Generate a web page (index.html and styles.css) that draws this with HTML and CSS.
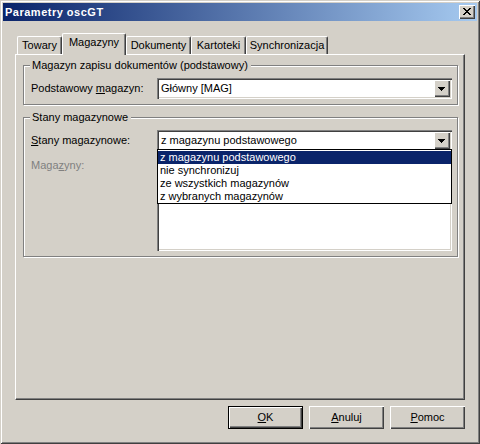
FILE: index.html
```html
<!DOCTYPE html>
<html lang="pl">
<head>
<meta charset="utf-8">
<title>Parametry oscGT</title>
<link rel="stylesheet" href="styles.css">
</head>
<body>
<div class="window">
  <div class="titlebar">
    <span class="title">Parametry oscGT</span>
    <span class="close"><svg width="8" height="7" viewBox="0 0 8 7" shape-rendering="crispEdges"><path d="M0 0h2v1H0z M6 0h2v1H6z M1 1h2v1H1z M5 1h2v1H5z M2 2h4v1H2z M3 3h2v1H3z M2 4h4v1H2z M1 5h2v1H1z M5 5h2v1H5z M0 6h2v1H0z M6 6h2v1H6z" fill="#000"/></svg></span>
  </div>
  <div class="tabstrip">
    <div class="tab t-towary">Towary</div>
    <div class="tab sel t-magazyny">Magazyny</div>
    <div class="tab t-dokumenty">Dokumenty</div>
    <div class="tab t-kartoteki">Kartoteki</div>
    <div class="tab t-synchro">Synchronizacja</div>
  </div>
  <div class="panel">
    <div class="group g1">
      <div class="legend">Magazyn zapisu dokumentów (podstawowy)</div>
      <div class="row">
        <label class="lbl">Podstawowy <u>m</u>agazyn:</label>
        <div class="combo">
          <span class="val">Główny [MAG]</span>
          <span class="ddbtn"><svg width="7" height="4" viewBox="0 0 7 4" shape-rendering="crispEdges"><path d="M0 0h7v1H0z M1 1h5v1H1z M2 2h3v1H2z M3 3h1v1H3z" fill="#000"/></svg></span>
        </div>
      </div>
    </div>
    <div class="group g2">
      <div class="legend">Stany magazynowe</div>
      <div class="row">
        <label class="lbl"><u>S</u>tany magazynowe:</label>
        <div class="combo open">
          <span class="val">z magazynu podstawowego</span>
          <span class="ddbtn"><svg width="7" height="4" viewBox="0 0 7 4" shape-rendering="crispEdges"><path d="M0 0h7v1H0z M1 1h5v1H1z M2 2h3v1H2z M3 3h1v1H3z" fill="#000"/></svg></span>
          <ul class="dropdown">
            <li class="hl">z magazynu podstawowego</li>
            <li>nie synchronizuj</li>
            <li>ze wszystkich magazynów</li>
            <li>z wybranych magazynów</li>
          </ul>
        </div>
      </div>
      <div class="row row-top">
        <label class="lbl disabled">Maga<u>z</u>yny:</label>
        <div class="listbox"></div>
      </div>
    </div>
  </div>
  <div class="buttons">
    <button class="btn default"><u>O</u>K</button>
    <button class="btn"><u>A</u>nuluj</button>
    <button class="btn"><u>P</u>omoc</button>
  </div>
</div>
</body>
</html>
```

FILE: styles.css
```css
html, body {
  margin: 0;
  padding: 0;
  background: #D4D0C8;
}
body {
  font-family: "Liberation Sans", Arial, sans-serif;
  font-size: 11px;
  line-height: 13px;
  color: #000;
}
.window {
  width: 480px;
  height: 444px;
  box-sizing: border-box;
  padding: 3px;
  background: #D4D0C8;
  box-shadow: inset 1px 1px 0 #D4D0C8, inset -1px -1px 0 #404040, inset 2px 2px 0 #FFFFFF, inset -2px -2px 0 #808080;
}
.titlebar {
  height: 18px;
  display: flex;
  align-items: center;
  justify-content: space-between;
  background: linear-gradient(to right, #0A246A, #A6CAF0);
  padding: 0 2px;
}
.title {
  color: #fff;
  font-weight: bold;
  letter-spacing: 0.5px;
}
.close {
  width: 16px;
  height: 14px;
  box-sizing: border-box;
  padding: 3px 0 0 4px;
  background: #D4D0C8;
  box-shadow: inset 1px 1px 0 #FFFFFF, inset -1px -1px 0 #404040, inset -2px -2px 0 #808080;
}
.close svg, .ddbtn svg { display: block; }

.tabstrip {
  display: flex;
  align-items: flex-end;
  height: 21px;
  margin: 12px 12px 0;
  padding-left: 2px;
}
.tab {
  height: 18px;
  box-sizing: border-box;
  text-align: center;
  padding-top: 2px;
  border-top: 1px solid #fff;
  border-left: 1px solid #fff;
  border-right: 1px solid #404040;
  border-radius: 2px 2px 0 0;
  box-shadow: inset -1px 0 0 #808080;
  background: #D4D0C8;
}
.tab.sel {
  height: 22px;
  margin-bottom: -1px;
  padding-top: 2px;
  position: relative;
  z-index: 1;
}
.t-towary { width: 45px; }
.t-magazyny { width: 64px; }
.t-dokumenty { width: 65px; }
.t-kartoteki { width: 55px; }
.t-synchro { width: 82px; }

.panel {
  margin: 0 12px;
  height: 346px;
  box-sizing: border-box;
  border-top: 1px solid #fff;
  border-left: 1px solid #fff;
  border-right: 1px solid #404040;
  border-bottom: 1px solid #404040;
  box-shadow: inset -1px -1px 0 #808080;
  padding: 10px 0 0 7px;
}
.group {
  position: relative;
  width: 435px;
  box-sizing: border-box;
  border: 1px solid #808080;
  box-shadow: inset 1px 1px 0 #fff, 1px 1px 0 #fff;
  padding: 12px 0 0 7px;
}
.g1 { height: 40px; }
.g2 { height: 140px; margin-top: 12px; }
.legend {
  position: absolute;
  top: -7px;
  left: 6px;
  padding: 0 3px 0 2px;
  background: #D4D0C8;
}
.row {
  display: flex;
  align-items: center;
}
.row-top {
  align-items: flex-start;
  margin-top: 6px;
}
.lbl {
  width: 126px;
  flex: none;
}
.row-top .lbl { padding-top: 2px; }
.disabled { color: #808080; }

.combo {
  position: relative;
  width: 295px;
  height: 21px;
  box-sizing: border-box;
  padding: 2px;
  background: #fff;
  display: flex;
  align-items: center;
  box-shadow: inset 1px 1px 0 #808080, inset 2px 2px 0 #404040, inset -1px -1px 0 #fff, inset -2px -2px 0 #D4D0C8;
}
.val {
  flex: 1;
  padding-left: 2px;
  white-space: nowrap;
}
.ddbtn {
  width: 16px;
  height: 17px;
  box-sizing: border-box;
  padding: 7px 0 0 4px;
  background: #D4D0C8;
  box-shadow: inset 1px 1px 0 #fff, inset -1px -1px 0 #404040, inset -2px -2px 0 #808080;
}
.dropdown {
  position: absolute;
  top: 19px;
  left: 0;
  width: 295px;
  box-sizing: border-box;
  margin: 0;
  padding: 1px 0 0;
  list-style: none;
  border: 1px solid #000;
  background: #fff;
  z-index: 2;
}
.dropdown li {
  height: 13px;
  line-height: 13px;
  padding-left: 2px;
  white-space: nowrap;
}
.dropdown li.hl {
  background: #0A246A;
  color: #fff;
}
.listbox {
  width: 295px;
  height: 94px;
  box-sizing: border-box;
  background: #fff;
  box-shadow: inset 1px 1px 0 #808080, inset 2px 2px 0 #404040, inset -1px -1px 0 #fff, inset -2px -2px 0 #D4D0C8;
}

.buttons {
  display: flex;
  justify-content: flex-end;
  gap: 6px;
  margin: 6px 12px 0;
}
.btn {
  width: 75px;
  height: 23px;
  box-sizing: border-box;
  padding: 0;
  border: 0;
  font: inherit;
  color: #000;
  background: #D4D0C8;
  box-shadow: inset 1px 1px 0 #fff, inset -1px -1px 0 #404040, inset -2px -2px 0 #808080;
}
.btn.default {
  border: 1px solid #000;
}
```
